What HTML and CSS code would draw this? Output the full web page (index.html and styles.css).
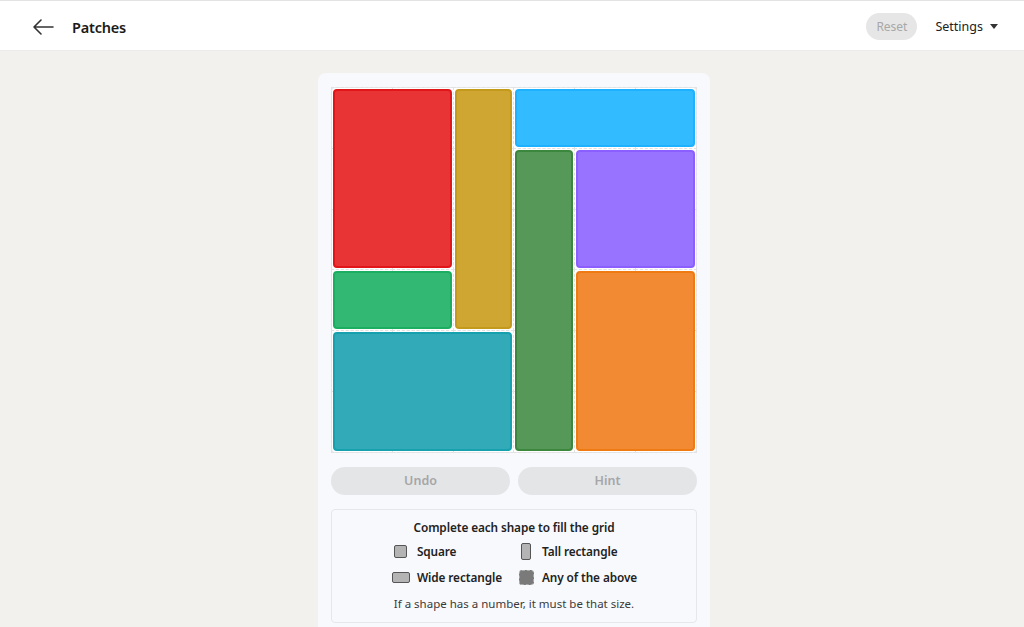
FILE: index.html
```html
<!DOCTYPE html>
<html lang="en">
<head>
<meta charset="utf-8">
<title>Patches</title>
<link rel="stylesheet" href="styles.css">
</head>
<body>
<header class="topbar">
  <div class="topbar-left">
    <button class="back" aria-label="Back">
      <svg width="22" height="16" viewBox="0 0 22 16"><path d="M21 8H2M9 1L2 8l7 7" fill="none" stroke="#333" stroke-width="1.6" stroke-linecap="round" stroke-linejoin="round"/></svg>
    </button>
    <h1 class="title">Patches</h1>
  </div>
  <div class="topbar-right">
    <button class="reset">Reset</button>
    <button class="settings">Settings <svg class="caret" width="8" height="5" viewBox="0 0 8 5"><path d="M0 0h8L4 5z" fill="#333"/></svg></button>
  </div>
</header>
<main class="main">
  <section class="card">
    <div class="board">
      <div class="grid">
        <div class="cell" style="grid-area:1/1"></div><div class="cell" style="grid-area:1/2"></div><div class="cell" style="grid-area:1/3"></div><div class="cell" style="grid-area:1/4"></div><div class="cell" style="grid-area:1/5"></div><div class="cell" style="grid-area:1/6"></div>
        <div class="cell" style="grid-area:2/1"></div><div class="cell" style="grid-area:2/2"></div><div class="cell" style="grid-area:2/3"></div><div class="cell" style="grid-area:2/4"></div><div class="cell" style="grid-area:2/5"></div><div class="cell" style="grid-area:2/6"></div>
        <div class="cell" style="grid-area:3/1"></div><div class="cell" style="grid-area:3/2"></div><div class="cell" style="grid-area:3/3"></div><div class="cell" style="grid-area:3/4"></div><div class="cell" style="grid-area:3/5"></div><div class="cell" style="grid-area:3/6"></div>
        <div class="cell" style="grid-area:4/1"></div><div class="cell" style="grid-area:4/2"></div><div class="cell" style="grid-area:4/3"></div><div class="cell" style="grid-area:4/4"></div><div class="cell" style="grid-area:4/5"></div><div class="cell" style="grid-area:4/6"></div>
        <div class="cell" style="grid-area:5/1"></div><div class="cell" style="grid-area:5/2"></div><div class="cell" style="grid-area:5/3"></div><div class="cell" style="grid-area:5/4"></div><div class="cell" style="grid-area:5/5"></div><div class="cell" style="grid-area:5/6"></div>
        <div class="cell" style="grid-area:6/1"></div><div class="cell" style="grid-area:6/2"></div><div class="cell" style="grid-area:6/3"></div><div class="cell" style="grid-area:6/4"></div><div class="cell" style="grid-area:6/5"></div><div class="cell" style="grid-area:6/6"></div>

        <div class="piece red" style="grid-area:1/1/4/3"></div>
        <div class="piece gold" style="grid-area:1/3/5/4"></div>
        <div class="piece blue" style="grid-area:1/4/2/7"></div>
        <div class="piece forest" style="grid-area:2/4/7/5"></div>
        <div class="piece purple" style="grid-area:2/5/4/7"></div>
        <div class="piece green" style="grid-area:4/1/5/3"></div>
        <div class="piece teal" style="grid-area:5/1/7/4"></div>
        <div class="piece orange" style="grid-area:4/5/7/7"></div>
      </div>
    </div>
    <div class="actions">
      <button class="action">Undo</button>
      <button class="action">Hint</button>
    </div>
    <div class="legend">
      <p class="legend-title">Complete each shape to fill the grid</p>
      <div class="legend-grid">
        <div class="legend-item"><span class="icon-box"><span class="shape sq"></span></span><span>Square</span></div>
        <div class="legend-item"><span class="icon-box"><span class="shape tall"></span></span><span>Tall rectangle</span></div>
        <div class="legend-item"><span class="icon-box"><span class="shape wide"></span></span><span>Wide rectangle</span></div>
        <div class="legend-item"><span class="icon-box"><span class="shape any"></span></span><span>Any of the above</span></div>
      </div>
      <p class="legend-note">If a shape has a number, it must be that size.</p>
    </div>
  </section>
</main>
</body>
</html>
```

FILE: styles.css
```css
* { box-sizing: border-box; }
html, body { margin: 0; padding: 0; }
body {
  font-family: "Noto Sans", "Open Sans", sans-serif;
  background: #f2f1ee;
  color: #1c1c1c;
  border-top: 1px solid #e3e3e3;
  height: 627px;
  overflow: hidden;
}
button { font-family: inherit; border: none; background: none; padding: 0; cursor: pointer; }

.topbar {
  height: 50px;
  background: #fff;
  border-bottom: 1px solid #ebebeb;
  display: flex;
  align-items: center;
  justify-content: space-between;
  padding: 2px 26px 0 32px;
}
.topbar-left { display: flex; align-items: center; gap: 18px; }
.back { display: flex; align-items: center; width: 22px; height: 20px; }
.title { margin: 0; font-size: 14.5px; font-weight: 600; color: #1a1a1a; letter-spacing: -0.2px; }
.topbar-right { display: flex; align-items: center; gap: 18px; }
.reset {
  height: 27px;
  width: 51px;
  border-radius: 14px;
  background: #e6e6e6;
  color: #a8a8a8;
  font-size: 12px;
}
.settings {
  display: flex;
  align-items: center;
  gap: 7px;
  font-size: 12.5px;
  color: #222;
}

.main { display: flex; justify-content: center; padding: 22px 0 0 4px; }
.card {
  width: 392px;
  background: #f8f9fc;
  border-radius: 8px;
  padding: 14px 13px 0;
  height: 570px;
  flex: none;
}
.board {
  background: #fff;
  border: 1px solid #e6e7ea;
  border-radius: 4px;
  padding: 1px;
}
.grid {
  display: grid;
  grid-template-columns: repeat(6, 1fr);
  grid-template-rows: repeat(6, 57.8px);
  gap: 3px;
}
.cell {
  border: 1px dashed #e2e2e2;
  margin: -2px;
}
.piece { border-radius: 4px; border: 2px solid; }
.red { background: #e83434; border-color: #e0161a; }
.gold { background: #cfa632; border-color: #c49a1c; }
.blue { background: #33bbff; border-color: #1eb1ff; }
.forest { background: #569858; border-color: #3b873e; }
.purple { background: #9873ff; border-color: #8b5fff; }
.green { background: #33b873; border-color: #1bae61; }
.teal { background: #33aab8; border-color: #17a0ae; }
.orange { background: #f28a33; border-color: #f07a12; }

.actions { display: grid; grid-template-columns: 1fr 1fr; gap: 8px; margin-top: 14px; }
.action {
  height: 28px;
  border-radius: 14px;
  background: #e4e5e7;
  color: #a6a6a8;
  font-size: 12.5px;
  font-weight: 600;
}

.legend {
  margin-top: 14px;
  border: 1px solid #e6e7ea;
  border-radius: 4px;
  padding: 9px 10px 11px;
  text-align: center;
}
.legend-title { margin: 0 0 6px; font-size: 11.8px; font-weight: 600; color: #222; letter-spacing: -0.1px; }
.legend-grid {
  display: inline-grid;
  grid-template-columns: auto auto;
  column-gap: 14px;
  row-gap: 6px;
  text-align: left;
}
.legend-item { display: flex; align-items: center; gap: 6px; font-size: 11.8px; font-weight: 600; color: #222; height: 20px; letter-spacing: -0.1px; }
.icon-box { width: 20px; height: 20px; display: flex; align-items: center; justify-content: center; }
.shape { display: block; background: #b4b4b4; border: 1px solid #555; border-radius: 2px; }
.sq { width: 13px; height: 13px; }
.tall { width: 10px; height: 17px; }
.wide { width: 18px; height: 11px; }
.any { width: 15px; height: 15px; background: #7a7a7a; border: 1px dashed #aaa; border-radius: 3px; }
.legend-note { margin: 9px 0 0; font-size: 11.5px; color: #3a3a3a; }
```
